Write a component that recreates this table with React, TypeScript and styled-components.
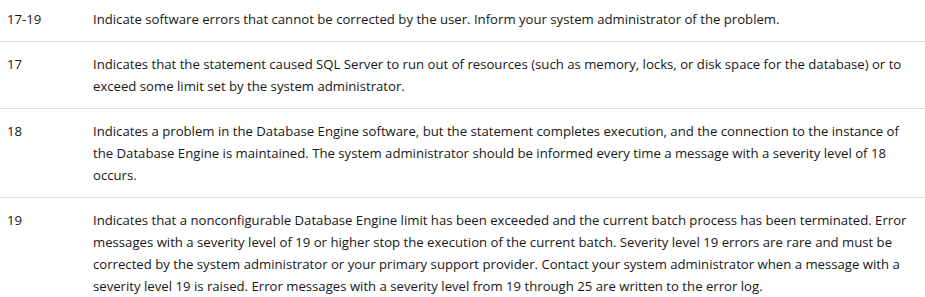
import React from 'react'
import styled, { createGlobalStyle } from 'styled-components'

const GlobalStyle = createGlobalStyle`
	html, body {
		margin: 0;
		padding: 0;
		background: #fff;
	}
	body {
		font-family: "Segoe UI", "Open Sans", "Noto Sans", sans-serif;
	}
`

const Table = styled.table`
	width: 925px;
	margin-top: -3px;
	border-collapse: collapse;
	font-size: 13.16px;
	line-height: 22px;
	color: #171717;
`

const Row = styled.tr<{ last?: boolean }>`
	border-bottom: ${({ last }) => (last ? 'none' : '1px solid #e1e1e1')};
`

const Cell = styled.td<{ narrow?: boolean }>`
	vertical-align: top;
	padding: 11px 8px 11px ${({ narrow }) => (narrow ? '7px' : '0')};
	width: ${({ narrow }) => (narrow ? '78px' : 'auto')};
`

const rows = [
	{
		level: '17-19',
		text: 'Indicate software errors that cannot be corrected by the user. Inform your system administrator of the problem.',
	},
	{
		level: '17',
		text: 'Indicates that the statement caused SQL Server to run out of resources (such as memory, locks, or disk space for the database) or to exceed some limit set by the system administrator.',
	},
	{
		level: '18',
		text: 'Indicates a problem in the Database Engine software, but the statement completes execution, and the connection to the instance of the Database Engine is maintained. The system administrator should be informed every time a message with a severity level of 18 occurs.',
	},
	{
		level: '19',
		text: 'Indicates that a nonconfigurable Database Engine limit has been exceeded and the current batch process has been terminated. Error messages with a severity level of 19 or higher stop the execution of the current batch. Severity level 19 errors are rare and must be corrected by the system administrator or your primary support provider. Contact your system administrator when a message with a severity level 19 is raised. Error messages with a severity level from 19 through 25 are written to the error log.',
	},
]

export default function App() {
	return (
		<>
			<GlobalStyle />
			<Table>
				<tbody>
					{rows.map((r, i) => (
						<Row key={r.level} last={i === rows.length - 1}>
							<Cell narrow>{r.level}</Cell>
							<Cell>{r.text}</Cell>
						</Row>
					))}
				</tbody>
			</Table>
		</>
	)
}
